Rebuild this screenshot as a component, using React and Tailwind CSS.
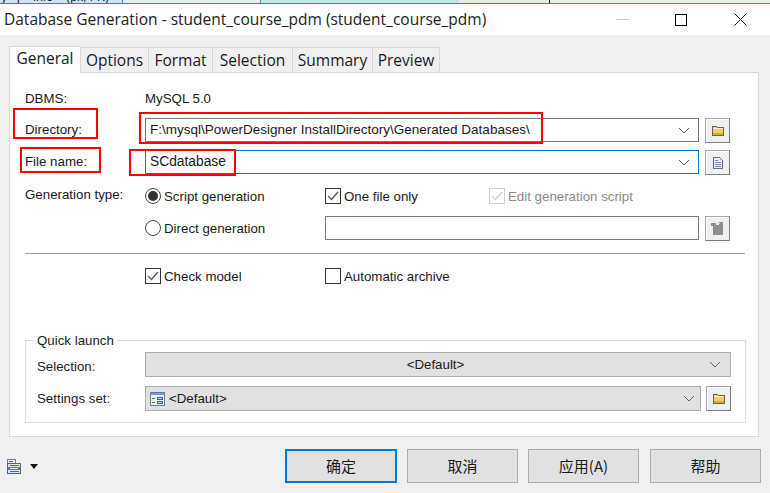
import React from 'react';

const formFont = { fontFamily: '"Liberation Sans", Arial, sans-serif' };

const Chevron = ({ color = '#555' }) => (
  <svg width="12" height="7" viewBox="0 0 12 7" fill="none">
    <path d="M1 1l5 5 5-5" stroke={color} strokeWidth="1" />
  </svg>
);

const FolderIcon = () => (
  <svg width="12" height="11" viewBox="0 0 12 11" shapeRendering="crispEdges">
    <path d="M0.5 1.5h4l1 1h6v8h-11z" fill="#f3cf68" stroke="#6b6440" />
    <rect x="1" y="3" width="10" height="1" fill="#fff4c4" />
    <rect x="1" y="8" width="10" height="2" fill="#d8a93c" />
  </svg>
);

const DocIcon = () => (
  <svg width="10" height="12" viewBox="0 0 10 12" shapeRendering="crispEdges">
    <path d="M0.5 0.5h6l3 3v8h-9z" fill="#e8edf7" stroke="#5a6f9c" />
    <path d="M2 3h3M2 5h6M2 7h6M2 9h6" stroke="#7e90b8" strokeWidth="1" />
  </svg>
);

const DisabledDocIcon = () => (
  <svg width="13" height="13" viewBox="0 0 13 13" shapeRendering="crispEdges">
    <path d="M0 1h5v2h3V0h4v13H2V4H0z" fill="#8f8f8f" />
    <rect x="6" y="1" width="3" height="1" fill="#dcdcdc" />
  </svg>
);

const SettingsIcon = () => (
  <svg width="15" height="14" viewBox="0 0 15 14" shapeRendering="crispEdges">
    <rect x="0.5" y="0.5" width="14" height="13" fill="#eef0e2" stroke="#5f7fa8" />
    <rect x="1" y="1" width="13" height="2" fill="#6f9be8" />
    <path d="M2 6h3M2 10h3" stroke="#5c6f8c" />
    <rect x="7.5" y="5.5" width="5" height="2" fill="#c9d8ee" stroke="#41618c" />
    <rect x="7.5" y="9.5" width="5" height="2" fill="#c9d8ee" stroke="#41618c" />
  </svg>
);

const PrintIcon = () => (
  <svg width="14" height="15" viewBox="0 0 14 15" shapeRendering="crispEdges">
    <rect x="0.5" y="0.5" width="8" height="5" fill="#e6e6e6" stroke="#6f7f96" />
    <rect x="0.5" y="4.5" width="13" height="10" fill="#e3e3e3" stroke="#4d648c" />
    <path d="M2 2.5h4M3 6.5h9M3 12.5h9" stroke="#666" />
    <rect x="1" y="8" width="12" height="3" fill="#5a70dc" />
    <rect x="3" y="9" width="8" height="1" fill="#e8ecff" />
  </svg>
);

const IconButton = ({ children }) => (
  <div className="w-[25px] h-[25px] shrink-0 ml-[6px] flex items-center justify-center bg-[#f0f0f0] border border-[#a8a8a8] border-b-[#808080] border-r-[#808080] shadow-[inset_1px_1px_0_#fff]">
    {children}
  </div>
);

const Checkbox = ({ checked, disabled }) => (
  <span className={`w-[16px] h-[16px] shrink-0 flex items-center justify-center border bg-white ${disabled ? 'border-[#cfcfcf]' : 'border-[#333333]'}`}>
    {checked && (
      <svg width="12" height="10" viewBox="0 0 12 10" fill="none">
        <path d="M1 5l3.5 3.5L11 1" stroke={disabled ? '#cccccc' : '#555555'} strokeWidth="1.2" />
      </svg>
    )}
  </span>
);

const Radio = ({ checked }) => (
  <span className="w-[16px] h-[16px] shrink-0 flex items-center justify-center rounded-full border border-[#444444] bg-white">
    {checked && <span className="w-[10px] h-[10px] rounded-full bg-[#333333]" />}
  </span>
);

const tabs = [
  ['Options', 'w-[68px]'],
  ['Format', 'w-[64px]'],
  ['Selection', 'w-[80px]'],
  ['Summary', 'w-[80px]'],
  ['Preview', 'w-[67px]'],
];

const footer = [
  ['取消', 'ml-[10px]'],
  ['应用(A)', 'ml-[10px]'],
  ['帮助', 'ml-[11px]'],
];

export default function App() {
  return (
    <div className="relative w-[770px] h-[493px] overflow-hidden bg-[#f0f0f0] text-[13.3px] text-[#1a1a1a]" style={formFont}>
      {/* strip of the window behind */}
      <div className="flex h-[3px]">
        <div className="w-[123px] bg-[#cfe6f2] overflow-hidden border-r border-[#2b8fb0]">
          <span className="block -mt-[10px] pl-[1px] text-[12px] leading-[14px] whitespace-pre">y   j    Info    (pk, FK)</span>
        </div>
        <div className="w-[138px] bg-[#e4eaec] border-r border-[#2b8fb0]" />
        <div className="w-[198px] bg-[#bfe8e8]" />
        <div className="w-[91px] bg-[#e8e8e8] border-r border-black" />
        <div className="flex-1 bg-[#ececec]" />
      </div>
      <div className="h-[1px] bg-[#2b8fb0]" />

      {/* title bar */}
      <div className="h-[31px] bg-white flex items-center pl-[4px] relative">
        <span className="text-[15.5px] text-[#222] whitespace-nowrap" style={{ fontFamily: '"Open Sans", sans-serif' }}>
          Database Generation - student_course_pdm (student_course_pdm)
        </span>
        <div className="ml-auto flex items-center">
          <span className="w-[12px] h-[1px] bg-[#c8c8c8]" />
          <span className="w-[12px] h-[12px] ml-[46px] border border-black" />
          <svg className="ml-[47px] mr-[23px]" width="13" height="13" viewBox="0 0 13 13" fill="none">
            <path d="M0.5 0.5l12 12M12.5 0.5l-12 12" stroke="#111" />
          </svg>
        </div>
      </div>

      {/* tabs */}
      <div className="flex items-end h-[37px] pl-[9px]" style={{ fontFamily: '"Open Sans", sans-serif' }}>
        <div className="w-[72px] h-[27px] -mb-[1px] pb-[3px] z-10 bg-white border border-b-0 border-[#d9d9d9] text-[15.5px] flex items-center justify-center">General</div>
        {tabs.map(([name, w]) => (
          <div key={name} className={`${w} h-[25px] pt-[2px] border border-l-0 border-b-0 border-[#d9d9d9] text-[15.5px] flex items-center justify-center`}>
            {name}
          </div>
        ))}
      </div>

      {/* panel */}
      <div className="ml-[9px] w-[750px] h-[365px] bg-white border border-[#d9d9d9] pl-[15px] pt-[15px]">
        <div className="flex items-center h-[20px]">
          <span className="w-[120px] mt-[2px]">DBMS:</span>
          <span className="mt-[2px]">MySQL 5.0</span>
        </div>

        <div className="flex mt-[10px] h-[25px]">
          <span className="w-[120px] self-end mb-[3px]">Directory:</span>
          <div className="w-[554px] h-[24px] border border-[#7a7a7a] flex items-center pl-[4px] pr-[8px] justify-between">
            <span className="text-[13.5px]">F:\mysql\PowerDesigner InstallDirectory\Generated Databases\</span>
            <Chevron />
          </div>
          <IconButton><FolderIcon /></IconButton>
        </div>

        <div className="flex mt-[7px] h-[25px]">
          <span className="w-[120px] self-end mb-[3px]">File name:</span>
          <div className="w-[554px] h-[24px] border border-[#0078d7] flex items-center pl-[4px] pr-[8px] justify-between">
            <span className="text-[13.8px]">SCdatabase</span>
            <Chevron />
          </div>
          <IconButton><DocIcon /></IconButton>
        </div>

        <div className="flex items-center mt-[11px] h-[20px]">
          <span className="w-[120px] -mt-[2px]">Generation type:</span>
          <div className="w-[180px] flex items-center gap-[3px]"><Radio checked /><span className="mt-[2px]">Script generation</span></div>
          <div className="w-[164px] flex items-center gap-[3px]"><Checkbox checked /><span className="mt-[2px]">One file only</span></div>
          <div className="flex items-center gap-[3px] text-[#8a8a8a]"><Checkbox checked disabled /><span className="mt-[2px]">Edit generation script</span></div>
        </div>

        <div className="flex mt-[10px] h-[25px]">
          <div className="w-[120px]" />
          <div className="w-[180px] flex items-center gap-[3px] h-[24px]"><Radio /><span className="mt-[2px]">Direct generation</span></div>
          <div className="w-[374px] h-[24px] border border-[#7a7a7a]" />
          <IconButton><DisabledDocIcon /></IconButton>
        </div>

        <div className="h-[1px] w-[720px] mt-[12px] bg-[#a0a0a0]" />

        <div className="flex items-center mt-[12px] h-[20px]">
          <span className="w-[120px]" />
          <div className="w-[180px] flex items-center gap-[3px]"><Checkbox checked /><span className="mt-[2px]">Check model</span></div>
          <div className="flex items-center gap-[3px]"><Checkbox /><span className="mt-[2px]">Automatic archive</span></div>
        </div>

        {/* quick launch */}
        <div className="relative mt-[54px] w-[721px] h-[83px] border border-[#dcdcdc] pl-[11px] pt-[11px]">
          <span className="absolute left-[8px] -top-[8px] bg-white px-[3px] leading-[15px]">Quick launch</span>
          <div className="flex h-[25px] items-center">
            <span className="w-[108px] mt-[4px]">Selection:</span>
            <div className="w-[586px] h-[25px] bg-[#e1e1e1] border border-[#adadad] flex items-center pr-[9px]">
              <span className="flex-1 text-center pl-[16px]">&lt;Default&gt;</span>
              <Chevron color="#666" />
            </div>
          </div>
          <div className="flex h-[25px] items-center mt-[9px]">
            <span className="w-[108px]">Settings set:</span>
            <div className="w-[556px] h-[25px] bg-[#e1e1e1] border border-[#adadad] flex items-center pl-[4px] pr-[5px] gap-[4px]">
              <SettingsIcon />
              <span className="flex-1">&lt;Default&gt;</span>
              <Chevron color="#666" />
            </div>
            <div className="-ml-[1px]"><IconButton><FolderIcon /></IconButton></div>
          </div>
        </div>
      </div>

      {/* footer */}
      <div className="flex items-center mt-[12px] h-[34px] pl-[7px] text-[15px]" style={{ fontFamily: '"Noto Sans CJK SC", sans-serif' }}>
        <PrintIcon />
        <svg className="ml-[9px]" width="8" height="5" viewBox="0 0 8 5"><path d="M0 0h8L4 5z" fill="#111" /></svg>
        <button className="ml-[247px] w-[112px] h-[34px] bg-[#e1e1e1] border-2 border-[#0078d7]">确定</button>
        {footer.map(([label, ml]) => (
          <button key={label} className={`${ml} w-[111px] h-[34px] bg-[#e1e1e1] border border-[#adadad]`}>{label}</button>
        ))}
      </div>

      {/* red annotation boxes drawn over the dialog */}
      <div className="absolute left-[13px] top-[108px] w-[85px] h-[31px] border-2 border-[#ff0000]" />
      <div className="absolute left-[20px] top-[147px] w-[81px] h-[26px] border-2 border-[#ff0000]" />
      <div className="absolute left-[139px] top-[112px] w-[404px] h-[32px] border-2 border-[#ff0000]" />
      <div className="absolute left-[129px] top-[149px] w-[107px] h-[27px] border-2 border-[#ff0000]" />
    </div>
  );
}
